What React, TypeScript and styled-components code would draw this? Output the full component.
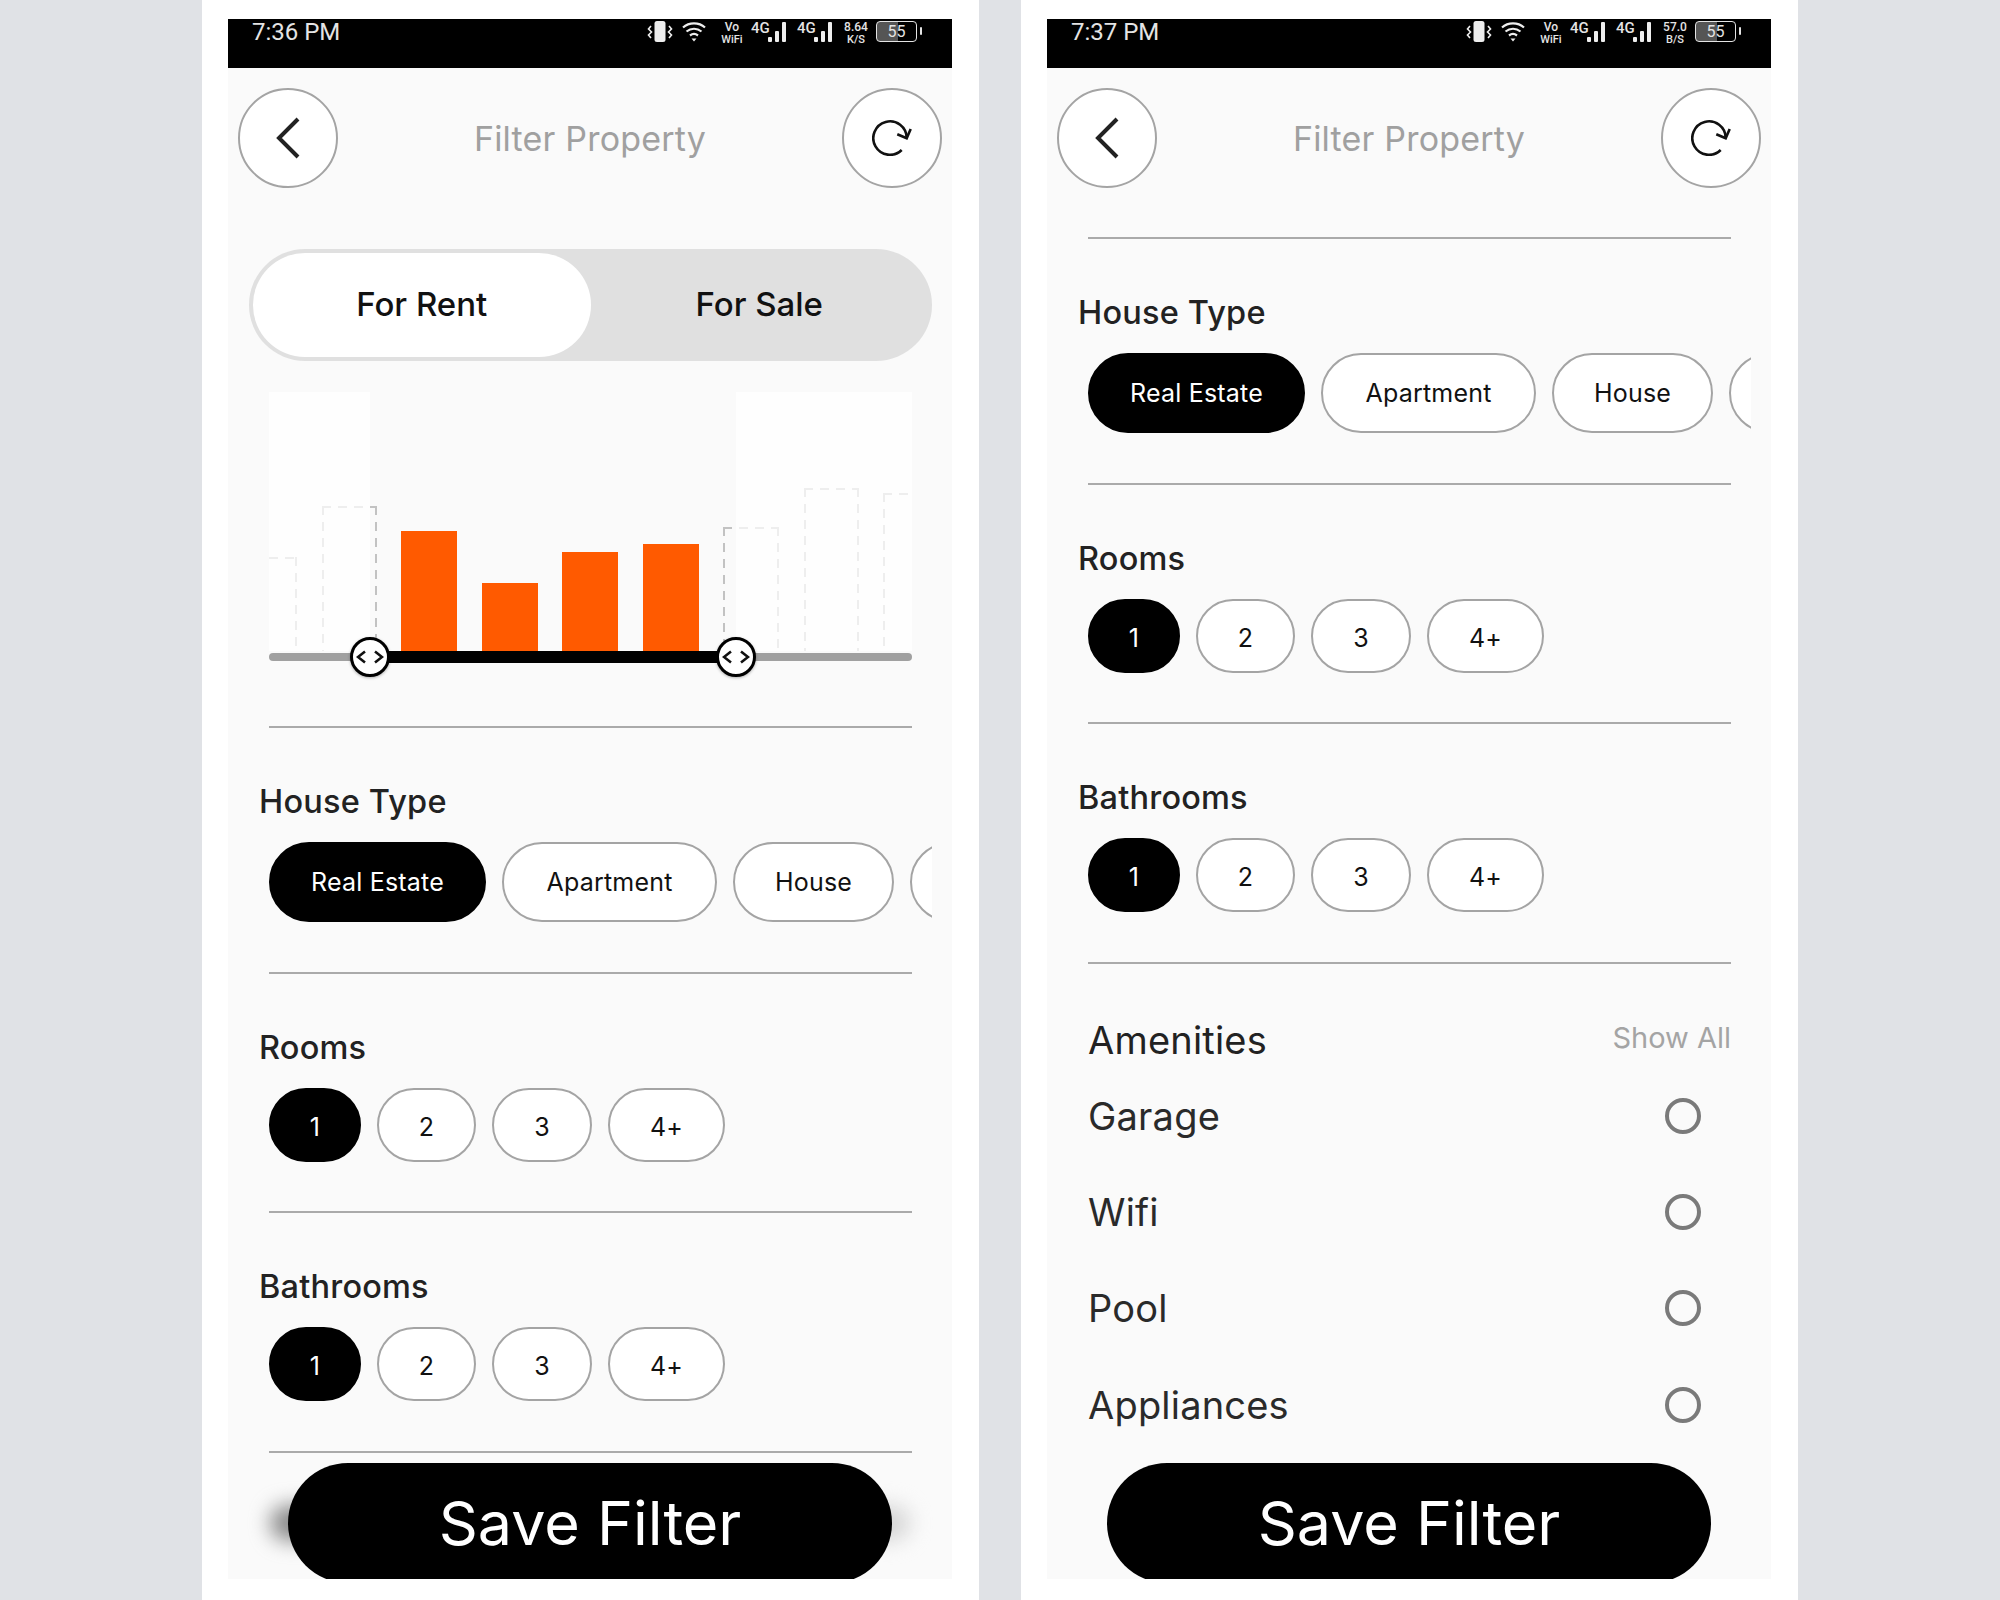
import styled, { createGlobalStyle } from "styled-components";

const GlobalStyle = createGlobalStyle`
  html, body {
    margin: 0;
    padding: 0;
    background: #e0e2e6;
    font-family: "Inter", "Liberation Sans", sans-serif;
  }
`;

const Page = styled.div`
  width: 2000px;
  height: 1600px;
  display: flex;
  justify-content: center;
  gap: 42px;
  overflow: hidden;
`;

const Phone = styled.div`
  width: 777px;
  height: 1600px;
  box-sizing: border-box;
  background: #ffffff;
  padding: 19px 27px 21px 26px;
`;

const Screen = styled.div`
  position: relative;
  isolation: isolate;
  height: 100%;
  background: #fafafa;
  display: flex;
  flex-direction: column;
  overflow: hidden;
`;

const StatusBar = styled.div`
  height: 49px;
  flex: none;
  background: #000;
  color: #e4e4e4;
  display: flex;
  justify-content: space-between;
  align-items: flex-start;
  padding: 0 35px 0 24px;
`;

const Clock = styled.span`
  font-family: "Roboto", sans-serif;
  font-size: 24px;
  line-height: 26px;
`;

const StatusIcons = styled.div`
  display: flex;
  align-items: flex-start;
  padding-top: 2px;
  height: 22px;
`;

const TwoLine = styled.span<{ $gap: number }>`
  width: 26px;
  display: flex;
  flex-direction: column;
  align-items: center;
  font-family: "Roboto", sans-serif;
  font-size: 12px;
  line-height: 12.5px;
  font-weight: 500;
  margin-right: ${({ $gap }) => $gap}px;
  & > span:last-child {
    font-size: 11px;
  }
`;

const Net = styled.span`
  width: 17px;
  font-family: "Roboto", sans-serif;
  font-size: 15px;
  line-height: 14px;
  font-weight: 500;
`;

const Signal = styled.svg`
  margin-right: 9px;
`;

const Battery = styled.span`
  position: relative;
  width: 41px;
  height: 21px;
  box-sizing: border-box;
  border: 1.5px solid #e4e4e4;
  border-radius: 4px;
  display: flex;
  align-items: center;
  justify-content: center;
  font-family: "Roboto", sans-serif;
  font-size: 16px;
  background: linear-gradient(90deg, #555 0 54%, #000 54%);
  &::after {
    content: "";
    position: absolute;
    right: -6px;
    top: 5px;
    width: 2px;
    height: 8px;
    background: #e4e4e4;
    border-radius: 1px;
  }
`;

const Header = styled.header`
  flex: none;
  display: flex;
  align-items: center;
  justify-content: space-between;
  padding: 20px 10px 0;
`;

const RoundButton = styled.button`
  width: 100px;
  height: 100px;
  box-sizing: border-box;
  border-radius: 50%;
  border: 2px solid #a4a4a4;
  background: #fff;
  padding: 0;
  display: flex;
  align-items: center;
  justify-content: center;
`;

const Title = styled.h1`
  margin: 0;
  font-size: 34px;
  font-weight: 400;
  letter-spacing: 0.2px;
  color: #a0a0a0;
`;

const Body = styled.div<{ $top: number }>`
  flex: 1;
  min-height: 0;
  padding: ${({ $top }) => $top}px 40px 0 41px;
  overflow: hidden;
`;

const Toggle = styled.div`
  margin: 0 -20px;
  height: 112px;
  box-sizing: border-box;
  border-radius: 56px;
  background: #e0e0e0;
  padding: 4px;
  display: flex;
`;

const ToggleOption = styled.div<{ $active?: boolean }>`
  flex: 1;
  display: flex;
  align-items: center;
  justify-content: center;
  padding-bottom: 2px;
  border-radius: 52px;
  font-size: 33px;
  font-weight: 500;
  color: #111;
  background: ${({ $active }) => ($active ? "#fff" : "transparent")};
`;

const Histogram = styled.div`
  position: relative;
  margin-top: 31px;
  height: 259px;
  display: flex;
  align-items: flex-end;
  gap: 24.5px;
`;

const dash = "#c2c2c2";

const Bar = styled.div<{ $h: number; $w: number; $on?: boolean; $clip?: "left" | "right" }>`
  flex: none;
  box-sizing: border-box;
  width: ${({ $w }) => $w}px;
  height: ${({ $h }) => $h}px;
  background-color: ${({ $on }) => ($on ? "#ff5a00" : "transparent")};
  ${({ $on, $clip }) =>
    !$on &&
    `
    background-image:
      repeating-linear-gradient(90deg, ${dash} 0 9px, transparent 9px 16px),
      repeating-linear-gradient(180deg, ${dash} 0 9px, transparent 9px 16px),
      repeating-linear-gradient(180deg, ${dash} 0 9px, transparent 9px 16px);
    background-repeat: no-repeat;
    background-size: 100% 2px, ${$clip === "left" ? "0" : "2px"} 100%, ${$clip === "right" ? "0" : "2px"} 100%;
    background-position: 0 0, 0 0, 100% 0;
  `}
`;

const Veil = styled.div<{ $left: number; $width: number }>`
  position: absolute;
  top: 0;
  bottom: 0;
  left: ${({ $left }) => $left}px;
  width: ${({ $width }) => $width}px;
  background: rgba(255, 255, 255, 0.72);
`;

const Track = styled.div`
  position: relative;
  height: 12px;
  display: flex;
  align-items: center;
`;

const TrackLine = styled.div`
  flex: 1;
  height: 8px;
  border-radius: 4px;
  background: #a0a0a0;
`;

const TrackRange = styled.div`
  position: absolute;
  left: 101px;
  width: 366px;
  height: 12px;
  background: #000;
`;

const Thumb = styled.div<{ $left: number }>`
  position: absolute;
  left: ${({ $left }) => $left}px;
  top: -14px;
  width: 40px;
  height: 40px;
  box-sizing: border-box;
  border-radius: 50%;
  border: 3px solid #000;
  background: #fff;
  box-shadow: 0 1px 3px rgba(0, 0, 0, 0.3);
  display: flex;
  align-items: center;
  justify-content: center;
`;

const Divider = styled.hr<{ $top?: number }>`
  margin: ${({ $top }) => $top ?? 0}px 0 0;
  border: 0;
  height: 2px;
  background: #aaaaaa;
`;

const Section = styled.section`
  padding: 54px 0 49.5px;
`;

const SectionTitle = styled.h2`
  margin: 0 0 20px -10px;
  font-size: 32.5px;
  line-height: 40px;
  font-weight: 500;
  letter-spacing: 0.2px;
  color: #222;
`;

const Chips = styled.div<{ $clip?: boolean }>`
  display: flex;
  gap: 16px;
  ${({ $clip }) => $clip && "margin-right: -20px; overflow: hidden;"}
`;

const Chip = styled.div<{ $active?: boolean; $w: number; $h: number; $drop: number }>`
  flex: none;
  box-sizing: border-box;
  width: ${({ $w }) => $w}px;
  height: ${({ $h }) => $h}px;
  padding-top: ${({ $drop }) => $drop}px;
  border-radius: ${({ $h }) => $h / 2}px;
  border: 2px solid ${({ $active }) => ($active ? "#000" : "#a4a4a4")};
  background: ${({ $active }) => ($active ? "#000" : "#fff")};
  color: ${({ $active }) => ($active ? "#fff" : "#111")};
  display: flex;
  align-items: center;
  justify-content: center;
  font-size: 25px;
  letter-spacing: 0.2px;
`;

const AmenitiesHead = styled.div`
  padding-top: 56px;
  height: 40px;
  display: flex;
  align-items: center;
  justify-content: space-between;
  margin-bottom: 8px;
`;

const AmenitiesTitle = styled.h2`
  margin: 0;
  font-size: 38px;
  font-weight: 400;
  letter-spacing: 0.2px;
  color: #222;
`;

const ShowAll = styled.span`
  font-size: 29px;
  color: #a4a4a4;
  padding-bottom: 4px;
`;

const AmenityRow = styled.div`
  height: 96.3px;
  display: flex;
  align-items: center;
  justify-content: space-between;
  padding-right: 30px;
  font-size: 38px;
  letter-spacing: 0.2px;
  color: #2a2a2a;
`;

const Radio = styled.span`
  width: 36px;
  height: 36px;
  box-sizing: border-box;
  border-radius: 50%;
  border: 4px solid #7a7a7a;
`;

const SaveButton = styled.button<{ $shadow?: boolean }>`
  position: absolute;
  left: 60px;
  top: 1444px;
  width: 604px;
  height: 120px;
  border: 0;
  border-radius: 60px;
  background: #000;
  color: #fff;
  font-family: inherit;
  font-size: 61px;
  font-weight: 400;
  ${({ $shadow }) =>
    $shadow &&
    `
    &::before {
      content: "";
      position: absolute;
      z-index: -1;
      left: -18px;
      right: -18px;
      top: 42px;
      height: 36px;
      border-radius: 18px;
      background: linear-gradient(90deg, #8a8a8a 0 12%, #d6d6d6 88%);
      filter: blur(10px);
    }
  `}
`;

function VibrateIcon() {
  return (
    <svg width="26" height="21" viewBox="0 0 26 21" style={{ marginRight: 9 }}>
      <rect x="7.5" y="0" width="11" height="21" rx="2.5" fill="#eee" />
      <path d="M4 5 L1.5 8 L4.5 11 L1.5 14 L4 17" fill="none" stroke="#eee" strokeWidth="1.6" />
      <path d="M22 5 L24.5 8 L21.5 11 L24.5 14 L22 17" fill="none" stroke="#eee" strokeWidth="1.6" />
    </svg>
  );
}

function WifiIcon() {
  return (
    <svg width="24" height="21" viewBox="0 0 24 21" style={{ marginRight: 13 }}>
      <g fill="none" stroke="#eee" strokeWidth="2.2">
        <path d="M1 6.5 C7 1 17 1 23 6.5" />
        <path d="M4.5 10.5 C9 6.8 15 6.8 19.5 10.5" />
        <path d="M8 14.5 C10.5 12.6 13.5 12.6 16 14.5" />
      </g>
      <path d="M9.5 17.5 H14.5 L12 20.5 Z" fill="#eee" />
    </svg>
  );
}

function SignalIcon() {
  return (
    <Signal width="20" height="21" viewBox="0 0 20 21">
      <rect x="0" y="16" width="4" height="5" rx="1" fill="#eee" />
      <rect x="7" y="10" width="4" height="11" rx="1" fill="#eee" />
      <rect x="14" y="1" width="4" height="20" rx="1" fill="#eee" />
    </Signal>
  );
}

function Status({ time, speed, unit }: { time: string; speed: string; unit: string }) {
  return (
    <StatusBar>
      <Clock>{time}</Clock>
      <StatusIcons>
        <VibrateIcon />
        <WifiIcon />
        <TwoLine $gap={6}>
          <span>Vo</span>
          <span>WiFi</span>
        </TwoLine>
        <Net>4G</Net>
        <SignalIcon />
        <Net>4G</Net>
        <SignalIcon />
        <TwoLine $gap={7}>
          <span>{speed}</span>
          <span>{unit}</span>
        </TwoLine>
        <Battery>55</Battery>
      </StatusIcons>
    </StatusBar>
  );
}

function TopBar() {
  return (
    <Header>
      <RoundButton>
        <svg width="26" height="42" viewBox="0 0 26 42">
          <path d="M23 2 L4 21 L23 40" fill="none" stroke="#222" strokeWidth="4" />
        </svg>
      </RoundButton>
      <Title>Filter Property</Title>
      <RoundButton>
        <svg width="40" height="36" viewBox="0 0 40 36">
          <path d="M29.7 30 A16.7 16.7 0 1 1 34.7 18" fill="none" stroke="#111" strokeWidth="2.6" />
          <path d="M25.3 14.3 L34.7 18.3 L38.7 9" fill="none" stroke="#111" strokeWidth="2.6" />
        </svg>
      </RoundButton>
    </Header>
  );
}

function ThumbArrows() {
  return (
    <svg width="28" height="14" viewBox="0 0 28 14">
      <path d="M9 1.5 L2 7 L9 12.5 M19 1.5 L26 7 L19 12.5" fill="none" stroke="#111" strokeWidth="2.6" />
    </svg>
  );
}

const bars = [
  { w: 28, h: 94, clip: "left" as const },
  { w: 55, h: 145 },
  { w: 56, h: 120, on: true },
  { w: 56, h: 68, on: true },
  { w: 56, h: 99, on: true },
  { w: 56, h: 107, on: true },
  { w: 56, h: 124 },
  { w: 55, h: 163 },
  { w: 29, h: 158, clip: "right" as const },
];

function PriceChart() {
  return (
    <>
      <Histogram>
        {bars.map((b, i) => (
          <Bar key={i} $w={b.w} $h={b.h} $on={b.on} $clip={b.clip} />
        ))}
        <Veil $left={0} $width={101} />
        <Veil $left={467} $width={176} />
      </Histogram>
      <Track>
        <TrackLine />
        <TrackRange />
        <Thumb $left={81}>
          <ThumbArrows />
        </Thumb>
        <Thumb $left={447}>
          <ThumbArrows />
        </Thumb>
      </Track>
    </>
  );
}

const houseTypes = [
  { label: "Real Estate", w: 217 },
  { label: "Apartment", w: 215 },
  { label: "House", w: 161 },
  { label: "", w: 160 },
];

const counts = [
  { label: "1", w: 92 },
  { label: "2", w: 99 },
  { label: "3", w: 100 },
  { label: "4+", w: 117 },
];

function FilterSections() {
  return (
    <>
      <Section>
        <SectionTitle>House Type</SectionTitle>
        <Chips $clip>
          {houseTypes.map((c, i) => (
            <Chip key={i} $w={c.w} $h={80} $drop={0} $active={i === 0}>
              {c.label}
            </Chip>
          ))}
        </Chips>
      </Section>
      <Divider />
      {["Rooms", "Bathrooms"].map((name) => (
        <div key={name}>
          <Section>
            <SectionTitle>{name}</SectionTitle>
            <Chips>
              {counts.map((c, i) => (
                <Chip key={c.label} $w={c.w} $h={74} $drop={4} $active={i === 0}>
                  {c.label}
                </Chip>
              ))}
            </Chips>
          </Section>
          <Divider />
        </div>
      ))}
    </>
  );
}

export default function App() {
  return (
    <Page>
      <GlobalStyle />
      <Phone>
        <Screen>
          <Status time="7:36 PM" speed="8.64" unit="K/S" />
          <TopBar />
          <Body $top={61}>
            <Toggle>
              <ToggleOption $active>For Rent</ToggleOption>
              <ToggleOption>For Sale</ToggleOption>
            </Toggle>
            <PriceChart />
            <Divider $top={63} />
            <FilterSections />
          </Body>
          <SaveButton $shadow>Save Filter</SaveButton>
        </Screen>
      </Phone>
      <Phone>
        <Screen>
          <Status time="7:37 PM" speed="57.0" unit="B/S" />
          <TopBar />
          <Body $top={49}>
            <Divider />
            <FilterSections />
            <AmenitiesHead>
              <AmenitiesTitle>Amenities</AmenitiesTitle>
              <ShowAll>Show All</ShowAll>
            </AmenitiesHead>
            {["Garage", "Wifi", "Pool", "Appliances"].map((a) => (
              <AmenityRow key={a}>
                {a}
                <Radio />
              </AmenityRow>
            ))}
          </Body>
          <SaveButton>Save Filter</SaveButton>
        </Screen>
      </Phone>
    </Page>
  );
}
